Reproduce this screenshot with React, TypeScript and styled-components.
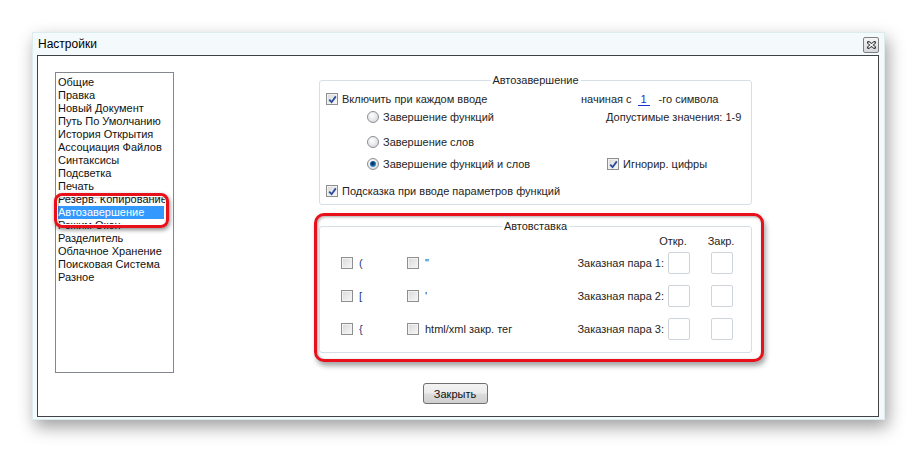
import styled, { createGlobalStyle } from "styled-components";

const GlobalStyle = createGlobalStyle`
	body {
		margin: 0;
		background: #ffffff;
		font-family: "Liberation Sans", Arial, sans-serif;
		font-size: 11px;
		color: #1e1e1e;
	}
`;

const Page = styled.div`
	box-sizing: border-box;
	width: 917px;
	height: 452px;
	padding: 32px 0 0 32px;
`;

const Dialog = styled.div`
	box-sizing: border-box;
	width: 853px;
	height: 388px;
	display: flex;
	flex-direction: column;
	padding: 0 5px 2px 4px;
	background: #f4fafb;
	border: 1px solid #dcebee;
	box-shadow: 3px 7px 16px rgba(0, 0, 0, 0.38);
`;

const TitleBar = styled.div`
	height: 22px;
	display: flex;
	align-items: center;
	justify-content: space-between;
	padding-left: 1px;
	font-size: 12px;
	color: #000;
`;

const CloseBox = styled.div`
	box-sizing: border-box;
	width: 16px;
	height: 16px;
	margin-top: 2px;
	border: 1px solid #7d7f82;
	border-radius: 2px;
	background: linear-gradient(#f6f6f6, #d6d8db);
	display: flex;
	align-items: center;
	justify-content: center;
`;

const Client = styled.div`
	flex: 1;
	display: flex;
	flex-direction: column;
	background: #fff;
	border: 1px solid #3f4144;
	padding: 16px 0 0 17px;
`;

const TopRow = styled.div`
	display: flex;
	gap: 145px;
`;

const ListBox = styled.div`
	box-sizing: border-box;
	position: relative;
	width: 119px;
	height: 301px;
	border: 1px solid #828790;
	padding: 3px 0 0 2px;
`;

const ListItem = styled.div<{ $selected?: boolean }>`
	height: 13px;
	line-height: 13px;
	width: ${(p) => (p.$selected ? "106px" : "114px")};
	white-space: nowrap;
	overflow: hidden;
	background: ${(p) => (p.$selected ? "#3399ff" : "transparent")};
	color: ${(p) => (p.$selected ? "#fff" : "#111")};
`;

const ListMark = styled.div`
	position: absolute;
	left: -2px;
	top: 120px;
	width: 115px;
	height: 35px;
	box-sizing: border-box;
	border: 3px solid #e8101a;
	border-radius: 8px;
	box-shadow: inset 0 0 0 1px #fff, inset 1px 1px 2px 1px rgba(0, 0, 0, 0.25),
		1px 2px 4px rgba(0, 0, 0, 0.45);
`;

const RightColumn = styled.div`
	width: 433px;
	margin-top: 8px;
	display: flex;
	flex-direction: column;
`;

const Group = styled.div<{ $height: number }>`
	box-sizing: border-box;
	position: relative;
	height: ${(p) => p.$height}px;
	border: 1px solid #d5dfe5;
	border-radius: 3px;
	background: #fff;
`;

const Legend = styled.span`
	position: absolute;
	top: -7px;
	left: 50%;
	transform: translateX(-50%);
	padding: 0 2px;
	line-height: 13px;
	background: #fff;
	color: #1e1e1e;
`;

const AutoBody = styled.div`
	padding: 10px 6px 0 6px;
`;

const OptionRow = styled.div<{ $gap: number }>`
	display: grid;
	grid-template-columns: 255px 1fr;
	align-items: center;
	height: 16px;
	margin-top: ${(p) => p.$gap}px;
`;

const Cell = styled.div<{ $indent?: number }>`
	display: flex;
	align-items: center;
	padding-left: ${(p) => p.$indent || 0}px;
	white-space: nowrap;
`;

const NumberField = styled.span`
	display: inline-block;
	width: 12px;
	margin: 0 9px 0 6px;
	text-align: center;
	color: #1a2fd8;
	border-bottom: 1px solid #1a2fd8;
	line-height: 12px;
`;

const Check = styled.label<{ $gap: number }>`
	display: flex;
	align-items: center;
	gap: ${(p) => p.$gap}px;
	white-space: nowrap;
`;

const Box = styled.span`
	box-sizing: border-box;
	width: 12px;
	height: 12px;
	flex: none;
	border: 1px solid #8e8f8f;
	background: linear-gradient(135deg, #d9d9d9, #f7f7f7);
	box-shadow: inset 0 0 0 1px #f2f2f2;
	display: flex;
	align-items: center;
	justify-content: center;
`;

const Radio = styled.span<{ $on?: boolean }>`
	box-sizing: border-box;
	width: 12px;
	height: 12px;
	flex: none;
	border-radius: 50%;
	border: 1px solid #8b8e92;
	background: radial-gradient(circle at 40% 35%, #ffffff, #cfd2d6);
	display: flex;
	align-items: center;
	justify-content: center;
	&::after {
		content: "";
		display: ${(p) => (p.$on ? "block" : "none")};
		width: 6px;
		height: 6px;
		border-radius: 50%;
		background: radial-gradient(circle at 45% 40%, #0b3a6e 25%, #2f8fd6 70%, #8dcdf5);
	}
`;

const Highlight = styled.div`
	margin: 8px -12px 0 -5px;
	padding: 10px 9px 6px 2px;
	border: 3px solid #e8101a;
	border-radius: 10px;
	background: #fff;
	box-shadow: inset 1px 1px 3px rgba(0, 0, 0, 0.35), 2px 4px 5px rgba(0, 0, 0, 0.35);
`;

const PasteBody = styled.div`
	padding: 6px 18px 0 21px;
`;

const PairHeader = styled.div`
	display: flex;
	justify-content: flex-end;
	gap: 18px;
	height: 16px;
	line-height: 16px;
	margin-right: -3px;
`;

const HeaderCell = styled.span`
	width: 30px;
	text-align: center;
`;

const PairGrid = styled.div`
	display: grid;
	grid-template-columns: 66px 1fr auto 26px 43px;
	grid-auto-rows: 22px;
	row-gap: 11px;
	align-items: center;
	margin-top: 3px;
`;

const Symbol = styled.span`
	color: #1d3a78;
`;

const PairLabel = styled.span`
	text-align: right;
	white-space: nowrap;
`;

const CharBox = styled.span`
	box-sizing: border-box;
	justify-self: end;
	width: 22px;
	height: 22px;
	border: 1px solid #cfd4da;
	border-radius: 2px;
	background: #fff;
`;

const ButtonRow = styled.div`
	display: flex;
	justify-content: center;
	padding-right: 23px;
	margin-top: 10px;
`;

const Button = styled.button`
	width: 65px;
	height: 21px;
	border: 1px solid #707070;
	border-radius: 3px;
	background: linear-gradient(#f3f3f3 0%, #ebebeb 48%, #dcdcdc 52%, #cfcfcf 100%);
	font-family: "Liberation Sans", Arial, sans-serif;
	font-size: 11px;
	color: #111;
	padding: 0;
`;

const CloseGlyph = () => (
	<svg width="9" height="8" viewBox="0 0 9 8">
		<path d="M1.5 1.5 L7.5 6.5 M7.5 1.5 L1.5 6.5" stroke="#3a3d40" strokeWidth="3" strokeLinecap="square" />
		<path d="M1.5 1.5 L7.5 6.5 M7.5 1.5 L1.5 6.5" stroke="#ffffff" strokeWidth="1.3" />
	</svg>
);

const Tick = () => (
	<svg width="9" height="9" viewBox="0 0 9 9">
		<path d="M1.2 4.6 L3.6 7.2 L7.8 1.4" fill="none" stroke="#2a4c9c" strokeWidth="1.8" />
	</svg>
);

function CheckBox({ checked, label, gap = 4 }: { checked?: boolean; label: React.ReactNode; gap?: number }) {
	return (
		<Check $gap={gap}>
			<Box>{checked && <Tick />}</Box>
			{label}
		</Check>
	);
}

function RadioOption({ on, label }: { on?: boolean; label: string }) {
	return (
		<Check $gap={4}>
			<Radio $on={on} />
			{label}
		</Check>
	);
}

const pages = [
	"Общие",
	"Правка",
	"Новый Документ",
	"Путь По Умолчанию",
	"История Открытия",
	"Ассоциация Файлов",
	"Синтаксисы",
	"Подсветка",
	"Печать",
	"Резерв. Копирование",
	"Автозавершение",
	"Режим Окон",
	"Разделитель",
	"Облачное Хранение",
	"Поисковая Система",
	"Разное",
];

const pairs = [
	{ a: "(", b: '"', n: 1 },
	{ a: "[", b: "'", n: 2 },
	{ a: "{", b: "html/xml закр. тег", n: 3 },
];

function App() {
	return (
		<Page>
			<GlobalStyle />
			<Dialog>
				<TitleBar>
					<span>Настройки</span>
					<CloseBox>
						<CloseGlyph />
					</CloseBox>
				</TitleBar>
				<Client>
					<TopRow>
						<ListBox>
							{pages.map((p) => (
								<ListItem key={p} $selected={p === "Автозавершение"}>
									{p}
								</ListItem>
							))}
							<ListMark />
						</ListBox>
						<RightColumn>
							<Group $height={125}>
								<Legend>Автозавершение</Legend>
								<AutoBody>
									<OptionRow $gap={0}>
										<CheckBox checked label="Включить при каждом вводе" />
										<Cell>
											начиная с<NumberField>1</NumberField>-го символа
										</Cell>
									</OptionRow>
									<OptionRow $gap={2}>
										<Cell $indent={41}>
											<RadioOption label="Завершение функций" />
										</Cell>
										<Cell $indent={25}>Допустимые значения: 1-9</Cell>
									</OptionRow>
									<OptionRow $gap={9}>
										<Cell $indent={41}>
											<RadioOption label="Завершение слов" />
										</Cell>
									</OptionRow>
									<OptionRow $gap={6}>
										<Cell $indent={41}>
											<RadioOption on label="Завершение функций и слов" />
										</Cell>
										<Cell $indent={26}>
											<CheckBox checked label="Игнорир. цифры" />
										</Cell>
									</OptionRow>
									<OptionRow $gap={11}>
										<CheckBox checked label="Подсказка при вводе параметров функций" />
									</OptionRow>
								</AutoBody>
							</Group>
							<Highlight>
								<Group $height={127}>
									<Legend>Автовставка</Legend>
									<PasteBody>
										<PairHeader>
											<HeaderCell>Откр.</HeaderCell>
											<HeaderCell>Закр.</HeaderCell>
										</PairHeader>
										<PairGrid>
											{pairs.map((r) => (
												<>
													<CheckBox key={r.a} gap={6} label={<Symbol>{r.a}</Symbol>} />
													<CheckBox
														key={r.b}
														gap={6}
														label={r.n === 3 ? r.b : <Symbol>{r.b}</Symbol>}
													/>
													<PairLabel>Заказная пара {r.n}:</PairLabel>
													<CharBox />
													<CharBox />
												</>
											))}
										</PairGrid>
									</PasteBody>
								</Group>
							</Highlight>
						</RightColumn>
					</TopRow>
					<ButtonRow>
						<Button>Закрыть</Button>
					</ButtonRow>
				</Client>
			</Dialog>
		</Page>
	);
}

export default App;
